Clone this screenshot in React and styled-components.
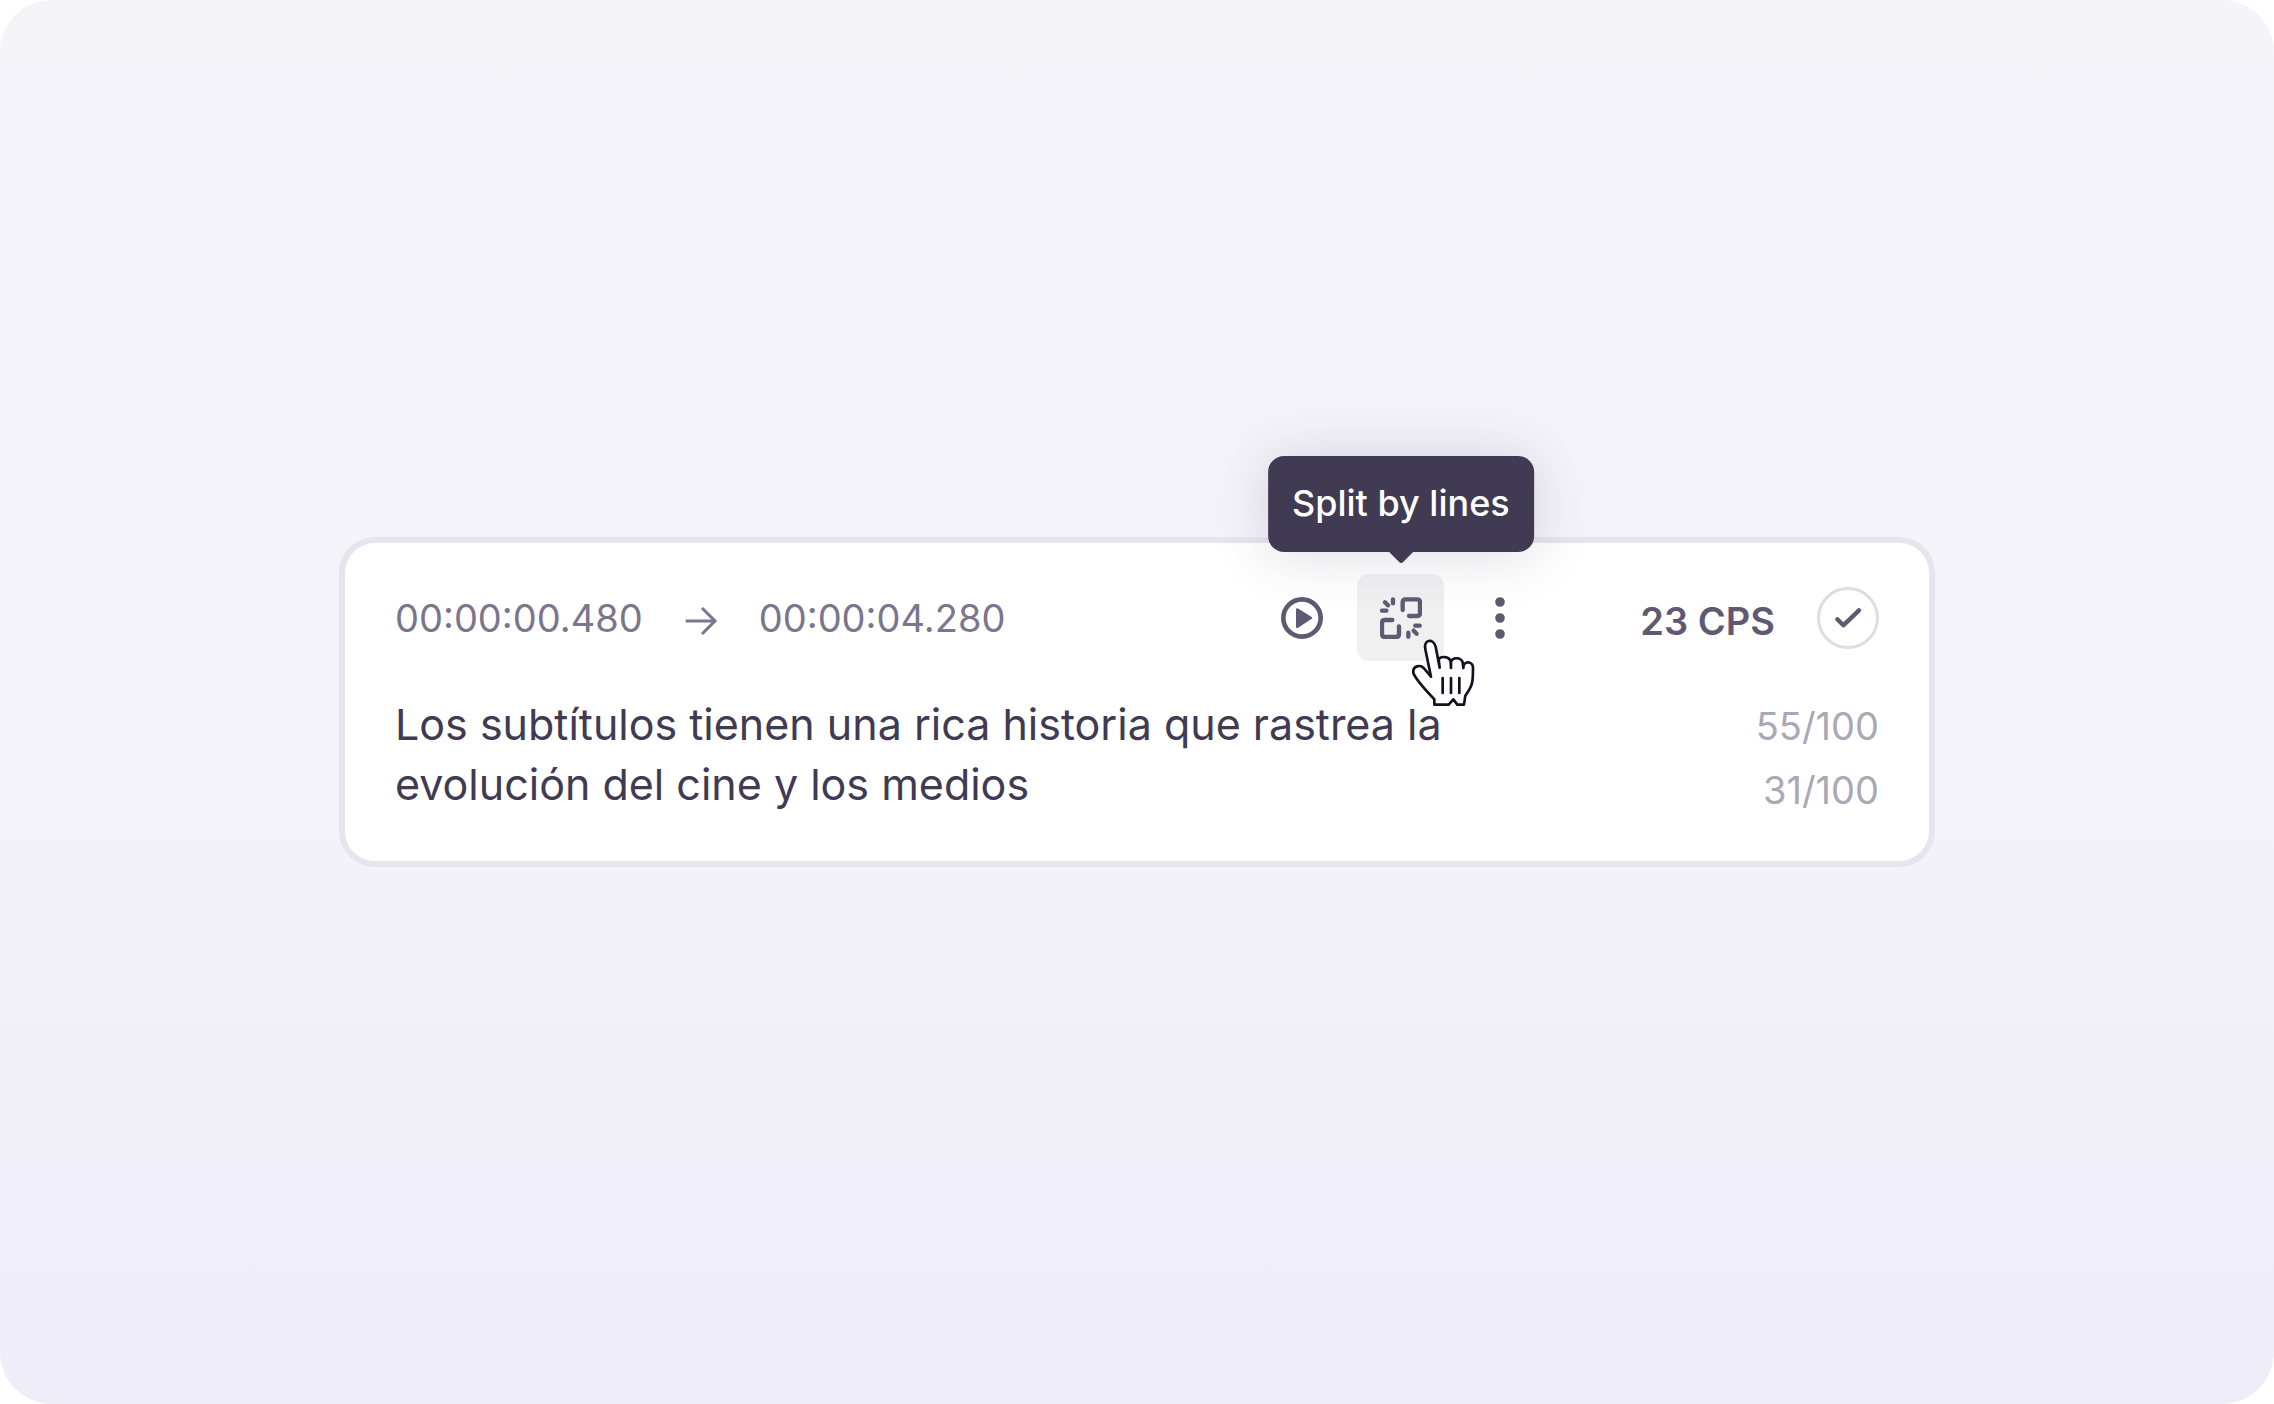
import React from 'react'
import styled, {createGlobalStyle} from 'styled-components'


const mainColor = '#403a52'
const iconColor = '#5f5a72'
const timeColor = '#7b758d'
const mutedColor = '#aaa7b6'

const GlobalStyle = createGlobalStyle`
  * {
    box-sizing: border-box;
  }

  body {
    margin: 0;
    background-color: #fff;
    font-family: Inter, 'Liberation Sans', sans-serif;
  }
`

const Page = styled.main`
  display: flex;
  align-items: center;
  min-height: 100vh;
  padding: 0 339px;
  border-radius: 52px;
  background: linear-gradient(180deg, #f4f4f9 0%, #f4f3f9 55%, #f1f0f6 76%, #f0eef8 84%, #efedf8 100%);
`

const Card = styled.article`
  flex: 1;
  padding: 31px 50px 47px;
  border: 6px solid #e6e5ee;
  border-radius: 36px;
  background-color: #fff;
`

const Header = styled.header`
  display: flex;
  align-items: center;
  height: 87px;
`

const Times = styled.div`
  display: flex;
  align-items: center;
  gap: 41px;
  margin-right: auto;
  color: ${timeColor};
`

const Time = styled.time`
  font-size: 38px;
  line-height: 48px;
`

const Icon = styled.svg`
  display: block;
  flex: none;
  width: ${props => props.$width || 42}px;
  height: ${props => props.$height || 42}px;
  fill: none;
  stroke: currentColor;
  stroke-linecap: round;
  stroke-linejoin: round;
`

const Actions = styled.div`
  display: flex;
  gap: 12px;
  margin-right: 97px;
`

const ActionWrapper = styled.div`
  position: relative;
`

const ActionButton = styled.button`
  display: flex;
  align-items: center;
  justify-content: center;
  width: 87px;
  height: 87px;
  padding: 0;
  border: none;
  border-radius: 12px;
  background-color: ${props => props.$active ? 'rgba(64, 58, 82, 0.08)' : 'transparent'};
  color: ${iconColor};
  cursor: pointer;
`

const Tooltip = styled.div`
  position: absolute;
  bottom: calc(100% + 22px);
  left: 50%;
  transform: translateX(-50%);
  padding: 23px 24px 25px;
  border-radius: 16px;
  background-color: ${mainColor};
  box-shadow: 0 2px 56px rgba(64, 58, 82, 0.18);
  color: #fff;
  font-size: 36px;
  font-weight: 500;
  line-height: 48px;
  white-space: nowrap;
`

const TooltipArrow = styled.svg`
  position: absolute;
  top: 100%;
  left: 50%;
  width: 24px;
  height: 12px;
  margin-left: -12px;
  fill: ${mainColor};
`

const Pointer = styled(Icon)`
  position: absolute;
  top: 64px;
  left: 53px;
  color: #14101f;
  pointer-events: none;
`

const Speed = styled.span`
  margin-right: 42px;
  padding-top: 6px;
  font-size: 38px;
  font-weight: 600;
  line-height: 48px;
  color: ${iconColor};
`

const Status = styled.span`
  display: flex;
  align-items: center;
  justify-content: center;
  width: 62px;
  height: 62px;
  border: 3px solid #dedde4;
  border-radius: 50%;
  color: ${iconColor};
`

const Body = styled.div`
  display: flex;
  justify-content: space-between;
  margin-top: 33px;
`

const Subtitle = styled.p`
  max-width: 1150px;
  margin: 0;
  font-size: 43px;
  line-height: 60px;
  color: ${mainColor};
`

const Counters = styled.ul`
  height: 120px;
  margin: 0;
  padding: 0;
  list-style-type: none;
  text-align: right;
  font-size: 38px;
  line-height: 64px;
  color: ${mutedColor};
`

function ArrowIcon() {
    return (
        <Icon $width={34} $height={34} viewBox="72 127 102 102" strokeWidth="9" aria-hidden="true">
            <path d="M77 187H166M126 148L165 187L126 226" strokeLinecap="butt" strokeLinejoin="miter"/>
        </Icon>
    )
}

function PlayIcon() {
    return (
        <Icon viewBox="60 49 126 126" aria-hidden="true">
            <circle cx="123" cy="112" r="56" strokeWidth="14"/>
            <path d="M109 87L149 112L109 138Z" fill="currentColor" strokeWidth="8"/>
        </Icon>
    )
}

function SplitIcon() {
    return (
        <Icon viewBox="89 79 126 126" strokeWidth="13" aria-hidden="true">
            <path d="M157 118V95Q157 86 166 86H200Q209 86 209 95V127Q209 136 200 136H176"/>
            <path d="M126 148H104Q95 148 95 157V190Q95 199 104 199H137Q146 199 146 190V167"/>
            <path d="M128 86V98M104 95L113 104M95 120H108"/>
            <path d="M208 165H195M199 189L190 180M174 198V186"/>
        </Icon>
    )
}

function MoreIcon() {
    return (
        <Icon viewBox="0 0 42 42" aria-hidden="true">
            {[5, 21, 37].map(y => <circle key={y} cx="21" cy={y} r="4.8" fill="currentColor" stroke="none"/>)}
        </Icon>
    )
}

function HandPointer() {
    return (
        <Pointer $width={66} $height={70} viewBox="180 200 198 210" strokeWidth="8" aria-hidden="true">
            <path
                fill="#fff"
                d="M243 316L226 234C219 204 250 200 257 226L269 289L266 264C272 254 297 254 302 270L303 290V272C307 257 332 257 338 273L340 290L341 282C346 268 370 270 369 292C369 335 367 344 346 373L342 400H322L310 384L296 400H253V384C235 365 197 325 190 305C187 282 212 280 221 290Z"
            />
            <path d="M278 320V365M303 320V365M328 320V365"/>
        </Pointer>
    )
}

function SubtitleCard({start, end, cps, text, counters}) {
    return (
        <Card>
            <Header>
                <Times>
                    <Time>{start}</Time>
                    <ArrowIcon/>
                    <Time>{end}</Time>
                </Times>
                <Actions>
                    <ActionButton type="button" aria-label="Play"><PlayIcon/></ActionButton>
                    <ActionWrapper>
                        <ActionButton type="button" $active aria-describedby="split-tooltip" aria-label="Split by lines">
                            <SplitIcon/>
                        </ActionButton>
                        <Tooltip id="split-tooltip" role="tooltip">
                            Split by lines
                            <TooltipArrow viewBox="0 0 24 12"><path d="M0 0H24L14 10Q12 12 10 10Z"/></TooltipArrow>
                        </Tooltip>
                        <HandPointer/>
                    </ActionWrapper>
                    <ActionButton type="button" aria-label="More"><MoreIcon/></ActionButton>
                </Actions>
                <Speed>{cps} CPS</Speed>
                <Status>
                    <Icon $width={32} $height={32} viewBox="694 214 96 96" strokeWidth="13" aria-hidden="true">
                        <path d="M710 266L728 284L775 239"/>
                    </Icon>
                </Status>
            </Header>
            <Body>
                <Subtitle>{text}</Subtitle>
                <Counters>
                    {counters.map(count => <li key={count}>{count}/100</li>)}
                </Counters>
            </Body>
        </Card>
    )
}

export default function App() {
    return (
        <>
            <GlobalStyle/>
            <Page>
                <SubtitleCard
                    start="00:00:00.480"
                    end="00:00:04.280"
                    cps={23}
                    text="Los subtítulos tienen una rica historia que rastrea la evolución del cine y los medios"
                    counters={[55, 31]}
                />
            </Page>
        </>
    )
}
